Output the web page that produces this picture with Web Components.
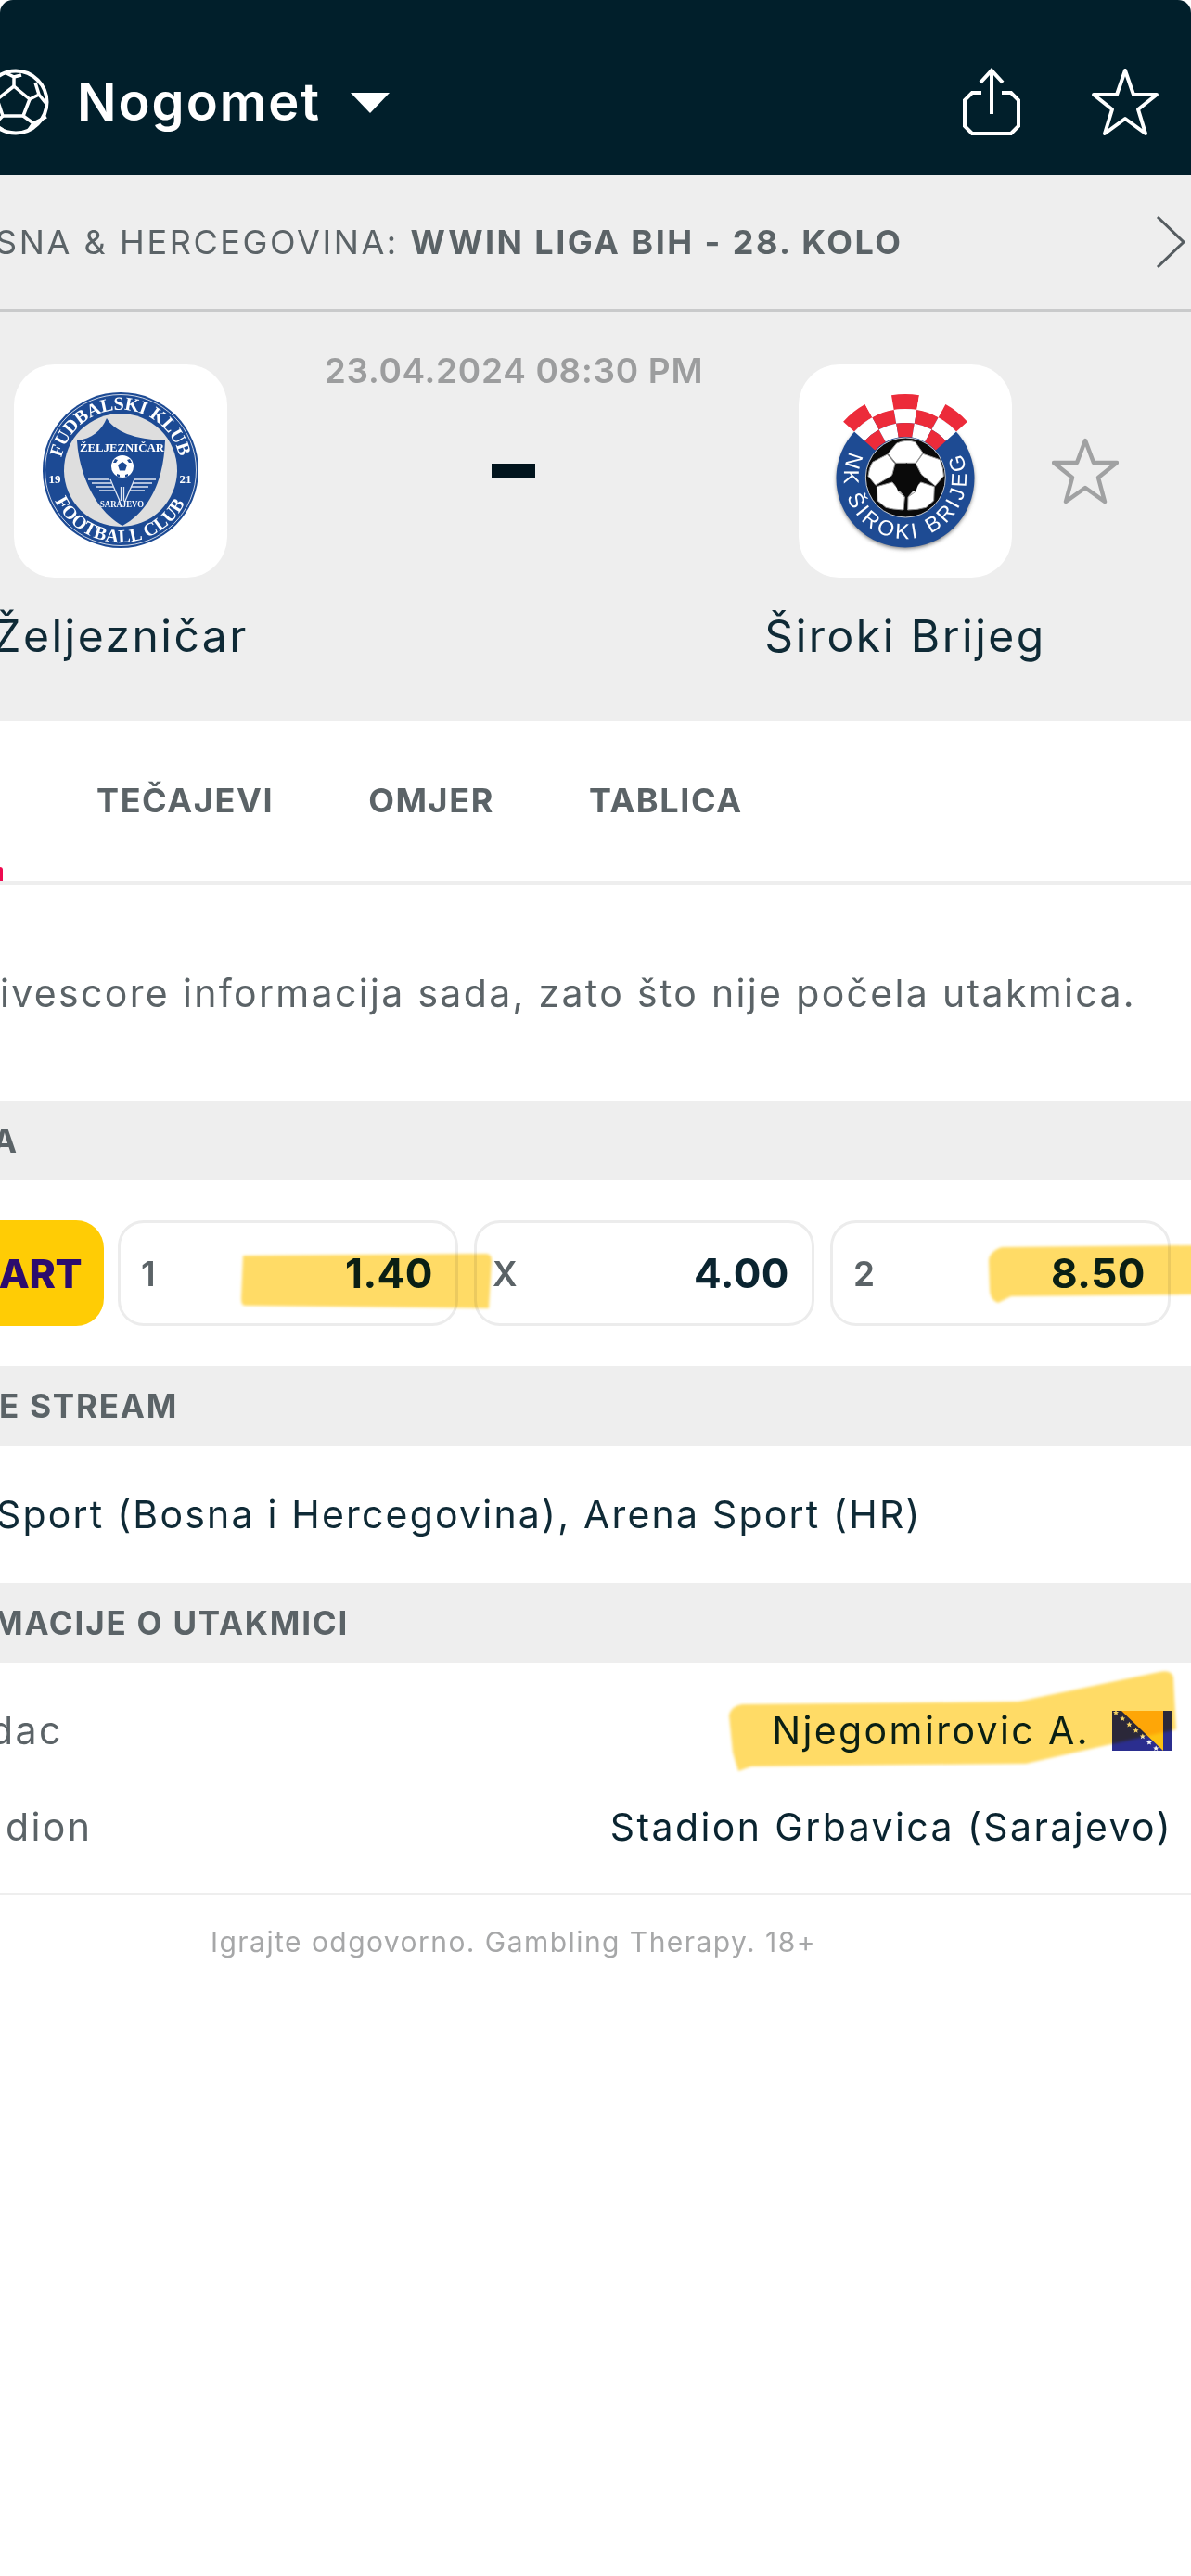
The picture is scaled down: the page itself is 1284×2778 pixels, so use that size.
<!DOCTYPE html>
<html lang="bs">
<head>
<meta charset="utf-8">
<title>Nogomet</title>
<style>
  html, body { margin: 0; padding: 0; background: #fff; }
  body { width: 1284px; height: 2778px; overflow: hidden; position: relative; font-family: Inter, "Liberation Sans", sans-serif; }
</style>
</head>
<body>
<sport-header title="Nogomet"></sport-header>
<league-band country="SNA &amp; HERCEGOVINA:" league="WWIN LIGA BIH - 28. KOLO"></league-band>
<score-board date="23.04.2024 08:30 PM" home="Željezničar" away="Široki Brijeg"></score-board>
<match-tabs>
  <span>TEČAJEVI</span>
  <span>OMJER</span>
  <span>TABLICA</span>
</match-tabs>
<notice-text>ivescore informacija sada, zato što nije počela utakmica.</notice-text>
<section-title>A</section-title>
<odds-row>
  <odd-button label="1" value="1.40"></odd-button>
  <odd-button label="X" value="4.00" shift="-5"></odd-button>
  <odd-button label="2" value="8.50"></odd-button>
</odds-row>
<section-title shift="-1">E STREAM</section-title>
<stream-line>Sport (Bosna i Hercegovina), Arena Sport (HR)</stream-line>
<section-title>MACIJE O UTAKMICI</section-title>
<info-list>
  <info-row label="dac" value="Njegomirovic A." shift="-11" flag></info-row>
  <info-row label="dion" value="Stadion Grbavica (Sarajevo)" shift="6"></info-row>
</info-list>
<page-footer>Igrajte odgovorno. Gambling Therapy. 18+</page-footer>
<marker-layer></marker-layer>

<script>
class BaseElement extends HTMLElement {
    constructor() {
        super();
        this.attachShadow({ mode: "open" });
    }
    connectedCallback() {
        this.render();
    }
}

class SportHeader extends BaseElement {
    render() {
        this.shadowRoot.innerHTML = `
        <style>
            :host { display: flex; align-items: center; height: 189px; box-sizing: border-box; padding: 31px 34px 0 0; background: #011f2b; border-radius: 14px 14px 0 0; color: #fff; overflow: hidden; }
            .ball { flex: none; margin-left: -18px; display: block; }
            h1 { margin: 0 0 0 29px; font: 600 56px Inter, sans-serif; letter-spacing: 2px; }
            .caret { flex: none; margin-left: 32px; margin-top: 1px; }
            .spacer { flex: 1; }
            svg { display: block; }
        </style>
        <svg class="ball" width="72" height="72" viewBox="0 0 72 72" fill="none" stroke="#fff" stroke-width="3.5" stroke-linejoin="round">
            <circle cx="35" cy="36" r="33.5" stroke-width="4"/>
            <path d="M33 19 L50 33 L43 51 L21 51 L15 33 Z"/>
            <path d="M33 19 L33 9 M25 5 L33 9 L41 7 M50 33 L60 28 M56 15 L60 28 L68 38 M43 51 L54 59 M49 66 L54 59 L68 52 M21 51 L12 60 M21 66 L12 60 L4 52 M15 33 L6 26 M12 11 L6 26"/>
        </svg>
        <h1>${this.getAttribute("title")}</h1>
        <svg class="caret" width="42" height="22" viewBox="0 0 42 22"><path d="M0 0H42L21 22Z" fill="#fff"/></svg>
        <span class="spacer"></span>
        <svg width="66" height="74" viewBox="0 0 66 74" fill="none" stroke="#fff" stroke-width="4">
            <path d="M22 27 H12 L4 35 V63 L12 71 H54 L62 63 V35 L54 27 H44"/>
            <path d="M33 2 V50 M21 16 L33 3 L45 16"/>
        </svg>
        <svg style="margin-left:74px" width="74" height="74" viewBox="0 0 74 74" fill="none" stroke="#fff" stroke-width="4" stroke-linejoin="round">
            <path d="M37 3 L46 29 H71 L51 45 L59 71 L37 55 L15 71 L23 45 L3 29 H28 Z"/>
        </svg>
        `;
    }
}

class LeagueBand extends BaseElement {
    render() {
        this.shadowRoot.innerHTML = `
        <style>
            :host { display: flex; align-items: center; height: 147px; box-sizing: border-box; background: #eeeeee; border-bottom: 3px solid #c9cacb; font: 400 36px Inter, sans-serif; color: #5b6367; overflow: hidden; }
            .txt { flex: 1; white-space: nowrap; margin-left: -5px; letter-spacing: 2.6px; }
            b { font-weight: 700; letter-spacing: 2.45px; }
            svg { flex: none; margin-right: 6px; }
        </style>
        <div class="txt">${this.getAttribute("country")} <b>${this.getAttribute("league")}</b></div>
        <svg width="32" height="56" viewBox="0 0 32 56" fill="none" stroke="#555c60" stroke-width="3"><path d="M2 1 L30 28 L2 55"/></svg>
        `;
    }
}

function sector(cx, cy, r1, r2, a1, a2) {
    const p = (r, a) => {
        const t = (a - 90) * Math.PI / 180;
        return (cx + r * Math.cos(t)).toFixed(1) + " " + (cy + r * Math.sin(t)).toFixed(1);
    };
    return `M${p(r1, a1)} L${p(r2, a1)} A${r2} ${r2} 0 0 1 ${p(r2, a2)} L${p(r1, a2)} A${r1} ${r1} 0 0 0 ${p(r1, a1)}Z`;
}

class HomeCrest extends BaseElement {
    render() {
        this.shadowRoot.innerHTML = `
        <style>
            :host { display: block; width: 230px; height: 230px; }
            text { font-family: "Liberation Serif", serif; font-weight: 700; fill: #fff; }
        </style>
        <svg width="230" height="230" viewBox="0 0 230 230">
            <defs>
                <path id="top" d="M51.400 100.500 A65 65 0 0 1 178.600 100.500"/>
                <path id="bot" d="M44.300 147 A78 78 0 0 0 185.700 147"/>
            </defs>
            <circle cx="115" cy="114" r="84" fill="#1c4a94"/>
            <circle cx="115" cy="114" r="81.500" fill="none" stroke="#cdd6e6" stroke-width="1"/>
            <circle cx="115" cy="114" r="61" fill="#dedede"/>
            <text font-size="20"><textPath href="#top" textLength="176">FUDBALSKI KLUB</textPath></text>
            <text font-size="20"><textPath href="#bot" textLength="174">FOOTBALL CLUB</textPath></text>
            <text x="44" y="128" font-size="13" text-anchor="middle">19</text>
            <text x="185" y="128" font-size="13" text-anchor="middle">21</text>
            <path d="M100 58 C108 72 130 81 163 82 C162 118 150 156 117 174 C88 158 70 118 68 82 C84 80 94 72 100 58Z" fill="#1c4a94"/>
            <text x="71" y="94" font-size="13" textLength="91" lengthAdjust="spacingAndGlyphs">ŽELJEZNIČAR</text>
            <circle cx="117" cy="110" r="12" fill="#fff"/>
            <path d="M117 105 l5 3.500 -2 6 h-6 l-2 -6Z M109 102 l3 1 -2 3 -3 0Z M125 102 l-3 1 2 3 3 0Z M111 118 l3 1 0 2.500 -3 -1Z M123 118 l-3 1 0 2.500 3 -1Z" fill="#1c4a94"/>
            <g stroke="#dfe6f2" stroke-width="1.600" fill="none">
                <path d="M80 124 H103 M84 128 H105 M88 132 H107 M92 136 H109 M130 124 H153 M128 128 H149 M126 132 H145 M124 136 H141"/>
                <path d="M104 124 L114 147 M130 124 L120 147 M115.500 132 V147 M118.500 132 V147" stroke-width="1.300"/>
            </g>
            <text x="93" y="154" font-size="9.500" textLength="47" lengthAdjust="spacingAndGlyphs">SARAJEVO</text>
        </svg>`;
    }
}

class AwayCrest extends BaseElement {
    render() {
        const c = 115, cy = 122;
        const rows = [[74, 90], [59, 74], [44, 59]];
        const step = 96 / 5;
        let squares = "";
        rows.forEach((row, i) => {
            for (let k = 0; k < 5; k++) {
                const red = (i + k) % 2 === 0;
                squares += `<path d="${sector(c, cy, row[0], row[1], -48 + k * step, -48 + (k + 1) * step)}" fill="${red ? "#ec2b3a" : "#ffffff"}"/>`;
            }
        });
        this.shadowRoot.innerHTML = `
        <style>
            :host { display: block; width: 230px; height: 230px; }
            text { font-family: "Liberation Sans", sans-serif; fill: #fff; }
        </style>
        <svg width="230" height="230" viewBox="0 0 230 230">
            <defs>
                <path id="ring" d="M55.200 94.100 A66 66 0 1 0 174.800 94.100"/>
                <filter id="soft"><feGaussianBlur stdDeviation="2"/></filter>
            </defs>
            <circle cx="115" cy="125" r="74" fill="#777" filter="url(#soft)"/>
            <circle cx="115" cy="123" r="74.500" fill="#1e4b93"/>
            ${squares}
            <text font-size="23"><textPath href="#ring" textLength="262">NK ŠIROKI BRIJEG</textPath></text>
            <g transform="translate(39 37) scale(.3333)">
                <circle cx="229" cy="255" r="128" fill="#0a0a0a"/>
                <circle cx="229" cy="255" r="129" fill="none" stroke="#c9c9c9" stroke-width="3"/>
                <g fill="#fff" stroke="#9a9a9a" stroke-width="3" stroke-linejoin="round">
                    <path d="M172 178 L200 144 Q230 130 260 140 L285 175 L262 208 H197Z"/>
                    <path d="M170 180 L195 210 L185 248 L132 280 L108 250 Q110 225 122 205Z"/>
                    <path d="M285 178 L340 197 Q352 225 352 250 L325 282 L280 245 L262 210Z"/>
                    <path d="M136 284 L186 270 L226 318 L222 360 Q185 358 165 352 L138 330Z"/>
                    <path d="M237 318 L278 270 L322 284 L320 330 L295 352 Q268 360 236 360Z"/>
                </g>
                <path d="M232 208 L280 245 L262 300 H205 L185 248Z" fill="#0a0a0a"/>
                <path d="M205 300 L226 318 M262 300 L237 318" stroke="#9a9a9a" stroke-width="3"/>
            </g>
        </svg>`;
    }
}

class ScoreBoard extends BaseElement {
    render() {
        this.shadowRoot.innerHTML = `
        <style>
            :host { display: flex; height: 442px; box-sizing: border-box; padding: 57px 0 0 15px; background: #eeeeee; overflow: hidden; }
            .team { flex: none; width: 230px; display: flex; flex-direction: column; align-items: center; }
            .tile { width: 230px; height: 230px; background: #fff; border-radius: 44px; flex: none; }
            .name { margin-top: 33px; font: 400 48px/60px Inter, sans-serif; letter-spacing: 2.5px; color: #0f2a36; white-space: nowrap; }
            .mid { flex: none; width: 616px; display: flex; flex-direction: column; align-items: center; margin-top: -17px; }
            .date { font: 600 37px/48px Inter, sans-serif; letter-spacing: .7px; color: #9c9d9e; white-space: nowrap; margin-left: 2px; }
            .dash { margin-top: 76px; width: 47px; height: 15px; background: #01141d; }
            .fav { flex: none; margin: 79px 0 0 43px; }
        </style>
        <div class="team"><div class="tile"><home-crest></home-crest></div><div class="name">${this.getAttribute("home")}</div></div>
        <div class="mid"><div class="date">${this.getAttribute("date")}</div><div class="dash"></div></div>
        <div class="team"><div class="tile"><away-crest></away-crest></div><div class="name">${this.getAttribute("away")}</div></div>
        <svg class="fav" width="72" height="72" viewBox="0 0 72 72" fill="none" stroke="#a0a1a2" stroke-width="4.500" stroke-linejoin="round">
            <path d="M36 3 L45 27 H70 L50 43 L57 69 L36 54 L15 69 L22 43 L2 27 H27 Z"/>
        </svg>`;
    }
}

class MatchTabs extends BaseElement {
    render() {
        this.shadowRoot.innerHTML = `
        <style>
            :host { display: flex; align-items: center; height: 176px; box-sizing: border-box; padding: 0 0 2px 104px; gap: 102px; border-bottom: 4px solid #eeeeee; font: 700 36px Inter, sans-serif; letter-spacing: 1.6px; color: #5b6367; position: relative; }
            .mark { position: absolute; left: 0; bottom: 0; width: 3px; height: 15px; background: #ee0a50; border-radius: 0 3px 0 0; }
        </style>
        <slot></slot><span class="mark"></span>`;
    }
}

class NoticeText extends BaseElement {
    render() {
        this.shadowRoot.innerHTML = `
        <style>
            :host { display: flex; align-items: center; height: 233px; box-sizing: border-box; font: 400 41px Inter, sans-serif; letter-spacing: 2.33px; color: #5b6367; white-space: nowrap; overflow: hidden; }
        </style>
        <slot></slot>`;
    }
}

class SectionTitle extends BaseElement {
    render() {
        const shift = this.getAttribute("shift") || "-8";
        this.shadowRoot.innerHTML = `
        <style>
            :host { display: flex; align-items: center; justify-content: flex-start; height: 86px; background: #eeeeee; font: 700 35px Inter, sans-serif; letter-spacing: 1.8px; color: #5b6367; white-space: nowrap; overflow: hidden; }
            div { margin-left: ${shift}px; }
        </style>
        <div><slot></slot></div>`;
    }
}

class OddsRow extends BaseElement {
    render() {
        this.shadowRoot.innerHTML = `
        <style>
            :host { display: flex; align-items: center; height: 200px; box-sizing: border-box; padding-right: 22px; gap: 17px; }
            .start { flex: none; width: 112px; height: 114px; margin-right: -2px; box-sizing: border-box; background: #ffcc05; border-radius: 0 30px 30px 0; display: flex; align-items: center; justify-content: flex-end; padding-right: 24px; font: 800 43px Inter, sans-serif; letter-spacing: -.5px; color: #2c0c6e; overflow: hidden; white-space: nowrap; }
        </style>
        <div class="start">ART</div><slot></slot>`;
    }
}

class OddButton extends BaseElement {
    render() {
        const shift = this.getAttribute("shift") || "0";
        this.shadowRoot.innerHTML = `
        <style>
            :host { flex: 1; display: flex; align-items: center; justify-content: space-between; height: 114px; box-sizing: border-box; padding: 0 24px 0 22px; border: 3px solid #ececec; border-radius: 28px; background: #fff; }
            .l { font: 600 37px Inter, sans-serif; color: #5b6367; margin-left: ${shift}px; }
            .v { font: 700 44px Inter, sans-serif; letter-spacing: .5px; color: #0a2430; }
        </style>
        <span class="l">${this.getAttribute("label")}</span><span class="v">${this.getAttribute("value")}</span>`;
    }
}

class StreamLine extends BaseElement {
    render() {
        this.shadowRoot.innerHTML = `
        <style>
            :host { display: flex; align-items: center; height: 148px; font: 400 41px Inter, sans-serif; letter-spacing: 2.2px; color: #0f2a36; white-space: nowrap; overflow: hidden; }
            div { margin-left: -4px; }
        </style>
        <div><slot></slot></div>`;
    }
}

class InfoList extends BaseElement {
    render() {
        this.shadowRoot.innerHTML = `
        <style>
            :host { display: flex; flex-direction: column; box-sizing: border-box; height: 251px; padding: 21px 20px 0 0; border-bottom: 3px solid #eeeeee; }
        </style>
        <slot></slot>`;
    }
}

class InfoRow extends BaseElement {
    render() {
        const shift = this.getAttribute("shift") || "0";
        const flag = this.hasAttribute("flag") ? `
            <svg class="flag" width="65" height="43" viewBox="0 0 65 43">
                <rect width="65" height="43" fill="#2b2e8f"/>
                <path d="M10 0 H55 V43 Z" fill="#fec211"/>
                <g fill="#f4f4f4">${[0, 1, 2, 3, 4, 5, 6].map(i => `<path transform="translate(${4 + i * 7.2} ${2 + i * 6.4})" d="M0 -3 L1 -1 L3 -1 L1.400 .5 L2 2.600 L0 1.400 L-2 2.600 L-1.400 .5 L-3 -1 L-1 -1Z"/>`).join("")}</g>
            </svg>` : "";
        this.shadowRoot.innerHTML = `
        <style>
            :host { display: flex; align-items: center; justify-content: space-between; height: 104px; font: 400 41px Inter, sans-serif; letter-spacing: 2.4px; white-space: nowrap; }
            .l { color: #5b6367; margin-left: ${shift}px; }
            .v { display: flex; align-items: center; gap: 24px; color: #0a2430; }
            .flag { flex: none; display: block; }
        </style>
        <span class="l">${this.getAttribute("label")}</span>
        <span class="v">${this.getAttribute("value")}${flag}</span>`;
    }
}

class PageFooter extends BaseElement {
    render() {
        this.shadowRoot.innerHTML = `
        <style>
            :host { display: block; box-sizing: border-box; padding: 30px 0 0 227px; font: 400 30px/40px Inter, sans-serif; letter-spacing: 1.45px; color: #a6a7a8; white-space: nowrap; }
        </style>
        <slot></slot>`;
    }
}

// yellow marker strokes drawn by hand over the screenshot
class MarkerLayer extends BaseElement {
    render() {
        this.shadowRoot.innerHTML = `
        <style>
            :host { position: absolute; left: 0; top: 0; width: 1284px; height: 2778px; pointer-events: none; mix-blend-mode: multiply; }
            svg { display: block; }
        </style>
        <svg width="1284" height="2778" viewBox="0 0 1284 2778">
            <defs><filter id="b"><feGaussianBlur stdDeviation="1.500"/></filter></defs>
            <g fill="#ffdb66" filter="url(#b)">
                <path d="M262 1354 L524 1352 Q530 1352 530 1360 L527 1411 L264 1408 Q260 1408 260 1400Z"/>
                <path d="M1066 1360 Q1066 1350 1080 1345 L1290 1343 L1290 1396 L1090 1398 L1076 1405 Q1067 1402 1067 1390Z"/>
                <path d="M800 1838 L1098 1835 L1250 1803 Q1264 1800 1265 1810 L1268 1865 L1106 1902 L810 1905 L796 1910 L790 1890 L786 1850 Q788 1840 800 1838Z"/>
            </g>
        </svg>`;
    }
}

customElements.define("sport-header", SportHeader);
customElements.define("league-band", LeagueBand);
customElements.define("home-crest", HomeCrest);
customElements.define("away-crest", AwayCrest);
customElements.define("score-board", ScoreBoard);
customElements.define("match-tabs", MatchTabs);
customElements.define("notice-text", NoticeText);
customElements.define("section-title", SectionTitle);
customElements.define("odds-row", OddsRow);
customElements.define("odd-button", OddButton);
customElements.define("stream-line", StreamLine);
customElements.define("info-list", InfoList);
customElements.define("info-row", InfoRow);
customElements.define("page-footer", PageFooter);
customElements.define("marker-layer", MarkerLayer);
</script>
</body>
</html>
